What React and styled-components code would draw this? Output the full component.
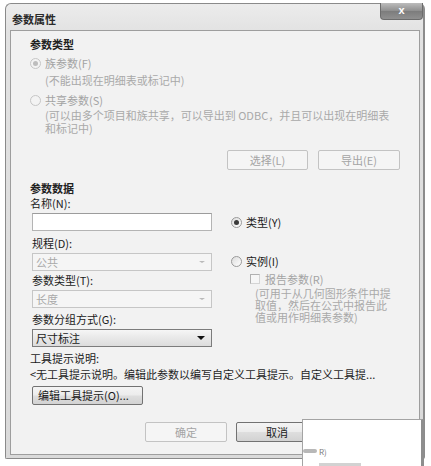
import React from 'react';
import styled, { createGlobalStyle } from 'styled-components';

const GlobalStyle = createGlobalStyle`
    html, body {
        margin: 0;
        padding: 0;
        background: #ffffff;
    }
    body {
        font-family: "Noto Sans CJK SC", "Noto Sans", "Liberation Sans", sans-serif;
        font-size: 11px;
        color: #1c1c1c;
    }
`;

const Page = styled.div`
    position: relative;
    width: 431px;
    height: 466px;
    padding: 3px 0 0 5px;
    box-sizing: border-box;
    overflow: hidden;
`;

const Window = styled.div`
    width: 420px;
    height: 456px;
    box-sizing: border-box;
    border: 1px solid #8a8a8a;
    border-right: 2px solid #8c8c8c;
    border-radius: 6px 6px 2px 2px;
    background: linear-gradient(#ececec, #e2e2e2 28px, #dadada);
    display: flex;
    flex-direction: column;
`;

const TitleBar = styled.div`
    height: 26px;
    display: flex;
    align-items: flex-start;
    padding-left: 6px;
`;

const Title = styled.div`
    font-weight: bold;
    font-size: 11px;
    line-height: 13px;
    margin-top: 9px;
    color: #2a2a2a;
`;

const CloseButton = styled.div`
    margin-left: auto;
    margin-top: -1px;
    width: 43px;
    height: 17px;
    box-sizing: border-box;
    border: 1px solid #6c6c6c;
    border-top: none;
    border-radius: 0 0 4px 4px;
    background: linear-gradient(#bcbcbc, #8e8e8e 50%, #7c7c7c 51%, #909090);
    color: #ffffff;
    font-family: "Liberation Sans", sans-serif;
    font-weight: bold;
    font-size: 11px;
    line-height: 15px;
    text-align: center;
`;

const Client = styled.div`
    flex: 1;
    margin: 0 3px 3px 4px;
    border: 1px solid #9e9e9e;
    background: #f2f2f2;
    padding: 5px 19px 0 19px;
    display: flex;
    flex-direction: column;
`;

const Heading = styled.div`
    font-weight: bold;
    line-height: ${p => p.$lh || 16}px;
    margin-top: ${p => p.$mt || 0}px;
    color: #222222;
`;

const Label = styled.div`
    line-height: ${p => p.$lh || 16}px;
    margin-top: ${p => p.$mt || 0}px;
    color: #1a1a1a;
    white-space: nowrap;
`;

const Note = styled.div`
    line-height: ${p => p.$lh || 16}px;
    margin-top: ${p => p.$mt || 0}px;
    padding-left: ${p => p.$indent || 0}px;
    color: ${p => (p.$dim ? '#a9a9a9' : '#1e1e1e')};
    white-space: nowrap;
`;

const OptionRow = styled.div`
    display: flex;
    align-items: center;
    gap: ${p => p.$gap || 4}px;
    height: 16px;
    margin-top: ${p => p.$mt || 0}px;
    padding-left: ${p => p.$indent || 0}px;
    color: ${p => (p.$dim ? '#a3a3a3' : '#1a1a1a')};
    white-space: nowrap;
`;

const Radio = styled.span`
    position: relative;
    width: 11px;
    height: 11px;
    box-sizing: border-box;
    border-radius: 50%;
    border: 1px solid ${p => (p.$dim ? '#c6c6c6' : '#9a9a9a')};
    background: ${p => (p.$dim ? '#f3f3f3' : 'linear-gradient(135deg, #dcdcdc, #ffffff)')};
    flex: none;

    &::after {
        content: '';
        display: ${p => (p.$checked ? 'block' : 'none')};
        position: absolute;
        left: 2px;
        top: 2px;
        width: 5px;
        height: 5px;
        border-radius: 50%;
        background: ${p => (p.$dim ? '#bdbdbd' : '#3a3a3a')};
    }
`;

const CheckBox = styled.span`
    width: 10px;
    height: 10px;
    box-sizing: border-box;
    border: 1px solid #b0b0b0;
    border-right-color: #d4d4d4;
    border-bottom-color: #d4d4d4;
    background: #f6f6f6;
    flex: none;
`;

const ButtonRow = styled.div`
    display: flex;
    justify-content: ${p => p.$justify || 'flex-end'};
    gap: ${p => p.$gap || 10}px;
    margin-top: ${p => p.$mt || 0}px;
    padding-left: ${p => p.$pl || 0}px;
`;

const Button = styled.div`
    width: ${p => p.$w || 82}px;
    height: ${p => p.$h || 20}px;
    box-sizing: border-box;
    border: 1px solid ${p => (p.$dim ? '#c3c3c3' : '#727272')};
    border-radius: 2px;
    background: ${p => (p.$dim
        ? '#f5f5f5'
        : 'linear-gradient(#f4f4f4, #ececec 48%, #dedede 52%, #d2d2d2)')};
    color: ${p => (p.$dim ? '#a4a4a4' : '#1a1a1a')};
    line-height: ${p => (p.$h || 20) - 2}px;
    text-align: ${p => p.$align || 'center'};
    padding-left: ${p => p.$pl || 0}px;
    white-space: nowrap;
`;

const Columns = styled.div`
    display: flex;
    align-items: flex-start;
`;

const LeftColumn = styled.div`
    width: 180px;
    margin-left: 2px;
    display: flex;
    flex-direction: column;
`;

const RightColumn = styled.div`
    margin-left: 19px;
    display: flex;
    flex-direction: column;
`;

const TextBox = styled.div`
    height: 18px;
    margin-top: ${p => p.$mt || 0}px;
    box-sizing: border-box;
    border: 1px solid #b4b4b4;
    border-top-color: #9c9c9c;
    background: #ffffff;
`;

const Select = styled.div`
    height: 18px;
    margin-top: ${p => p.$mt || 0}px;
    box-sizing: border-box;
    border: 1px solid ${p => (p.$dim ? '#c6c6c6' : '#7c7c7c')};
    background: ${p => (p.$dim ? '#f5f5f5' : 'linear-gradient(#f6f6f6, #e8e8e8 50%, #dcdcdc)')};
    color: ${p => (p.$dim ? '#a9a9a9' : '#1a1a1a')};
    line-height: 16px;
    padding: 0 6px 0 3px;
    display: flex;
    align-items: center;
    justify-content: space-between;
`;

const Arrow = styled.span`
    width: 0;
    height: 0;
    border-left: ${p => (p.$dim ? 3 : 4)}px solid transparent;
    border-right: ${p => (p.$dim ? 3 : 4)}px solid transparent;
    border-top: ${p => (p.$dim ? 2 : 4)}px solid ${p => (p.$dim ? '#b9b9b9' : '#111111')};
`;

const Cover = styled.div`
    position: absolute;
    left: 302px;
    top: 419px;
    width: 122px;
    height: 47px;
    box-sizing: border-box;
    background: #ffffff;
    border-top: 1px solid #a4a4a4;
    border-left: 1px solid #a4a4a4;
    border-right: 3px solid #8e8e8e;
    display: flex;
    flex-direction: column;
    justify-content: flex-end;
`;

const CoverScrap = styled.div`
    display: flex;
    align-items: center;
    gap: 2px;
    height: 10px;
    margin-bottom: 7px;
    font-size: 8px;
    color: #7a7a7a;
`;

const ScrapBar = styled.span`
    width: 14px;
    height: 4px;
    border-radius: 2px;
    background: #b8b8b8;
`;

const ScrapSmear = styled.div`
    margin: 0 0 0 16px;
    width: 42px;
    height: 3px;
    background: #d2d2d2;
`;

const App = () => {
    return (
        <Page>
            <GlobalStyle />
            <Window>
                <TitleBar>
                    <Title>参数属性</Title>
                    <CloseButton>x</CloseButton>
                </TitleBar>
                <Client>
                    <Heading>参数类型</Heading>
                    <OptionRow $mt={3} $dim>
                        <Radio $dim $checked />
                        <span>族参数(F)</span>
                    </OptionRow>
                    <Note $mt={1} $indent={15} $dim>(不能出现在明细表或标记中)</Note>
                    <OptionRow $mt={4} $dim>
                        <Radio $dim />
                        <span>共享参数(S)</span>
                    </OptionRow>
                    <Note $mt={1} $lh={13} $indent={15} $dim>
                        (可以由多个项目和族共享，可以导出到 ODBC，并且可以出现在明细表
                        <br />
                        和标记中)
                    </Note>
                    <ButtonRow $mt={15}>
                        <Button $dim $w={81}>选择(L)</Button>
                        <Button $dim>导出(E)</Button>
                    </ButtonRow>

                    <Heading $mt={11} $lh={15}>参数数据</Heading>
                    <Label $lh={15}>名称(N):</Label>
                    <Columns>
                        <LeftColumn>
                            <TextBox $mt={2} />
                            <Label $mt={4}>规程(D):</Label>
                            <Select $mt={2} $dim>
                                <span>公共</span>
                                <Arrow $dim />
                            </Select>
                            <Label $mt={1}>参数类型(T):</Label>
                            <Select $mt={2} $dim>
                                <span>长度</span>
                                <Arrow $dim />
                            </Select>
                            <Label $mt={3}>参数分组方式(G):</Label>
                            <Select $mt={2}>
                                <span>尺寸标注</span>
                                <Arrow />
                            </Select>
                        </LeftColumn>
                        <RightColumn>
                            <OptionRow $mt={3}>
                                <Radio $checked />
                                <span>类型(Y)</span>
                            </OptionRow>
                            <OptionRow $mt={23}>
                                <Radio />
                                <span>实例(I)</span>
                            </OptionRow>
                            <OptionRow $mt={2} $indent={19} $gap={5} $dim>
                                <CheckBox />
                                <span>报告参数(R)</span>
                            </OptionRow>
                            <Note $lh={12} $indent={24} $dim>
                                (可用于从几何图形条件中提
                                <br />
                                取值，然后在公式中报告此
                                <br />
                                值或用作明细表参数)
                            </Note>
                        </RightColumn>
                    </Columns>

                    <Label $mt={3}>工具提示说明:</Label>
                    <Note>&lt;无工具提示说明。编辑此参数以编写自定义工具提示。自定义工具提...</Note>
                    <ButtonRow $mt={4} $justify="flex-start" $pl={2}>
                        <Button $w={111} $h={19} $align="left" $pl={5}>编辑工具提示(O)...</Button>
                    </ButtonRow>
                    <ButtonRow $mt={17} $justify="flex-start" $pl={115} $gap={9}>
                        <Button $dim>确定</Button>
                        <Button>取消</Button>
                    </ButtonRow>
                </Client>
            </Window>
            <Cover>
                <CoverScrap>
                    <ScrapBar />
                    <span>R)</span>
                </CoverScrap>
                <ScrapSmear />
            </Cover>
        </Page>
    );
};

export default App;
